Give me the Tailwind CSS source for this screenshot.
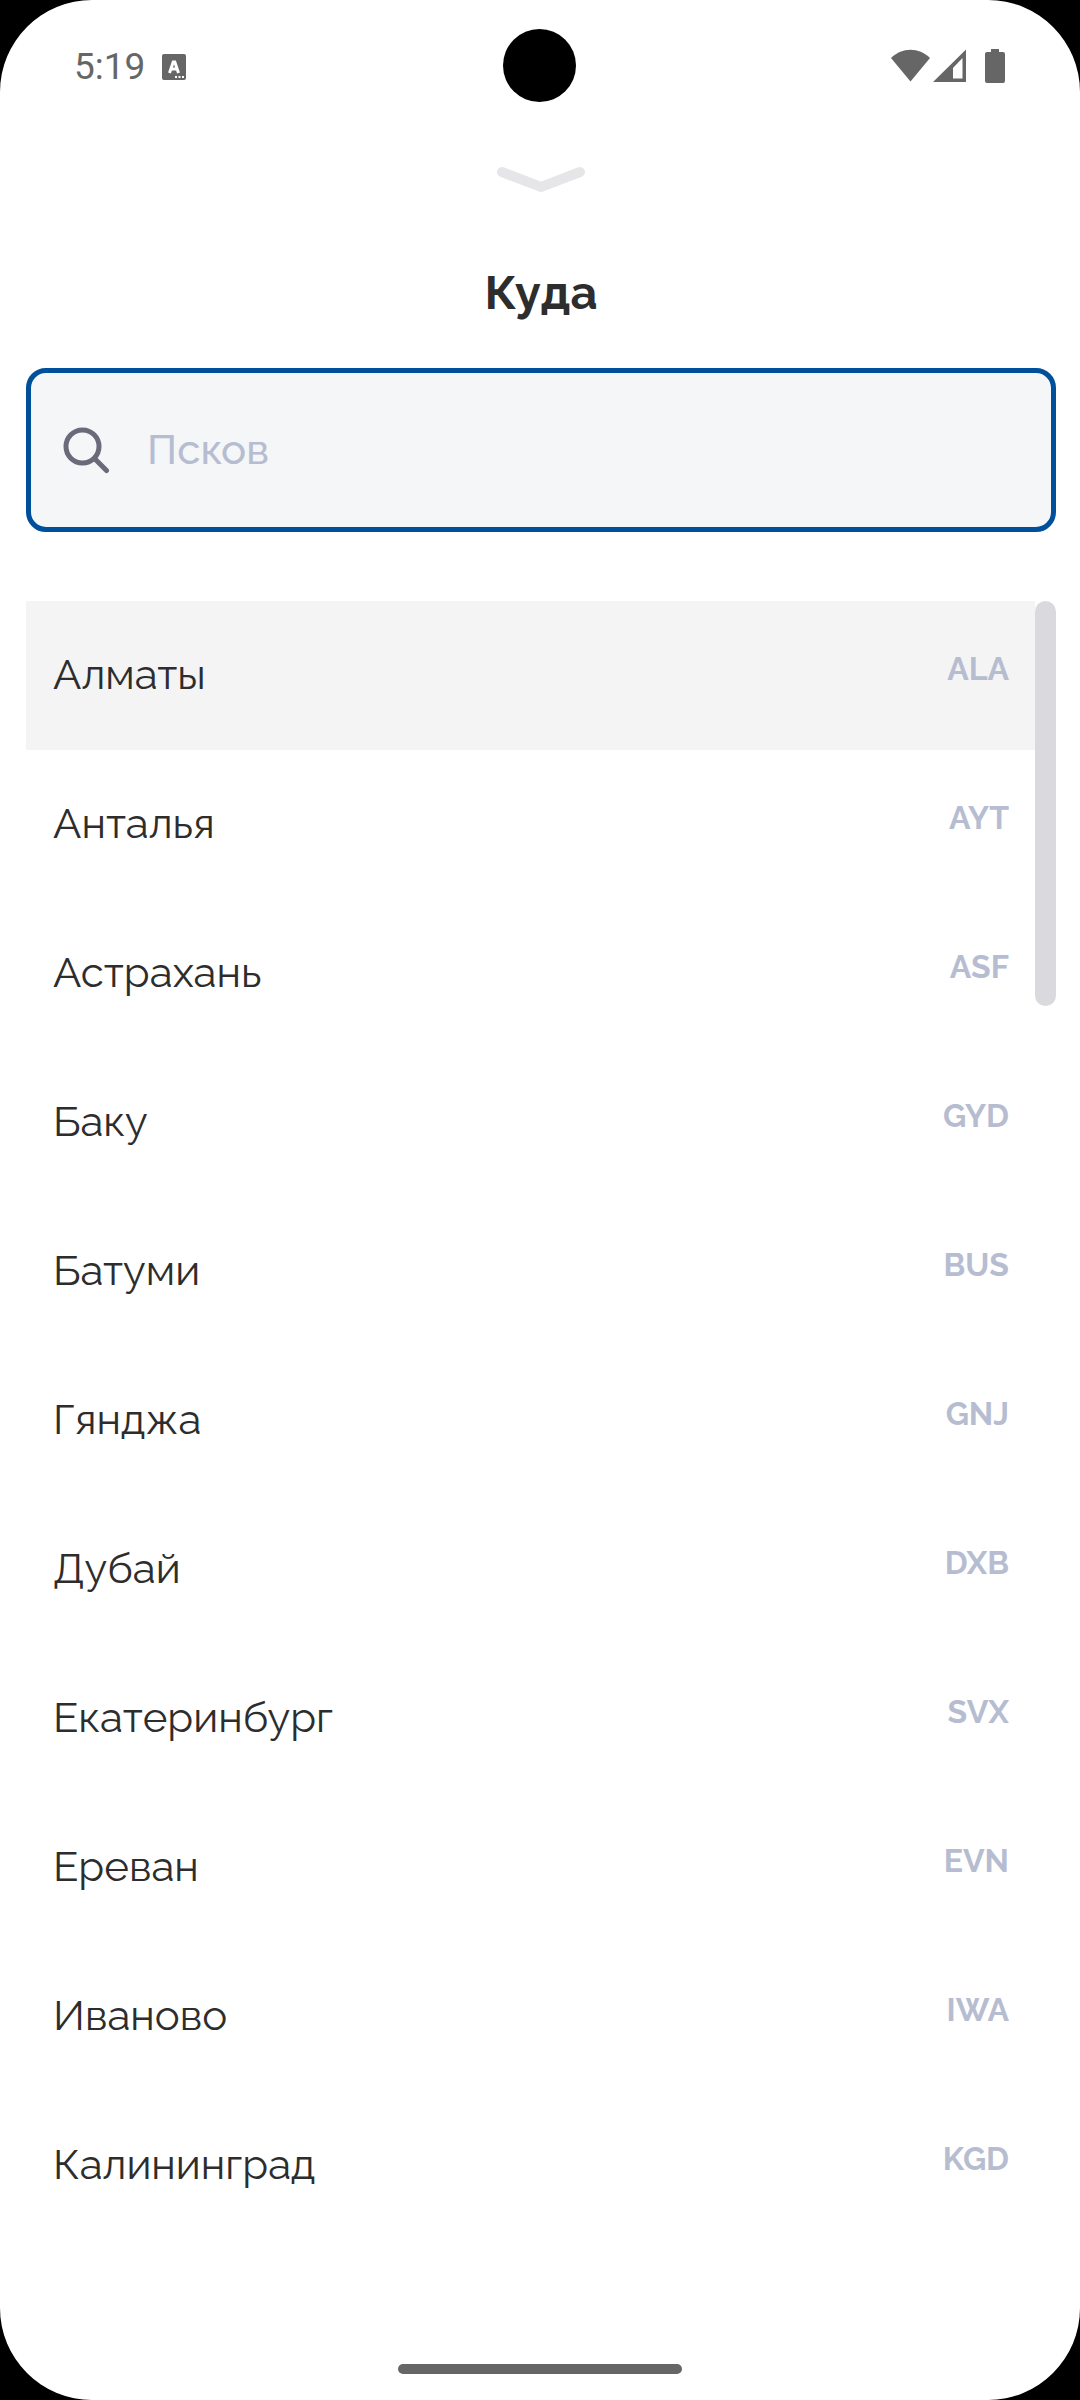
<!DOCTYPE html>
<html lang="ru">
<head>
<meta charset="utf-8">
<meta name="viewport" content="width=device-width, initial-scale=1">
<title>Куда</title>
<script src="https://cdn.jsdelivr.net/npm/@tailwindcss/browser@4"></script>
</head>
<body class="bg-black">
<div class="flex min-h-screen flex-col rounded-[92px] bg-white font-['Raleway','Inter',sans-serif] text-[#2d2d2d]">
  <!-- Status bar -->
  <header class="grid h-[131px] grid-cols-3 items-center px-[74px] text-[#666]">
    <div class="flex items-center gap-[17px] pt-[2px]">
      <time class="font-['Roboto',sans-serif] text-[37px] leading-none">5:19</time>
      <svg class="h-[26px] w-6" viewBox="0 0 24 26" aria-hidden="true">
        <rect width="24" height="26" rx="2" fill="currentColor"/>
        <path d="M7.500 19 11.200 8h1.600L16.500 19M9 15h6" fill="none" stroke="#fff" stroke-width="3"/>
        <path d="M13 22h2v2h-2zM16.500 22h2v2h-2zM20 22h2v2h-2z" fill="#fff"/>
      </svg>
    </div>
    <div class="size-[73px] justify-self-center rounded-full bg-black"></div>
    <div class="flex items-center justify-end">
      <svg class="h-[34px] w-[115px]" viewBox="0 0 115 34" fill="currentColor" aria-hidden="true">
        <path d="M0 9C11-2 28-2 39 9L19.500 32.500z"/>
        <path fill-rule="evenodd" d="M75 .5V33H42zM71.500 9 62 19V29.500h9.500z"/>
        <path d="M100 0h8v3h4q2 0 2 2v27q0 2-2 2H96q-2 0-2-2V5q0-2 2-2h4z"/>
      </svg>
    </div>
  </header>

  <main class="flex grow flex-col pr-6 pl-[26px]">
    <button type="button" aria-label="Закрыть" class="mt-[34px] self-center">
      <svg class="h-7 w-[90px]" viewBox="0 0 90 28" fill="none" stroke="#e6e6e8" stroke-width="10" stroke-linecap="round" aria-hidden="true">
        <path d="M6 7 45 22 84 7"/>
      </svg>
    </button>
    <h1 class="mt-[72px] text-center text-[47px] leading-[56px] font-bold">Куда</h1>
    <label class="mt-[47px] flex h-[164px] items-center gap-[37px] rounded-[20px] border-5 border-[#004f9b] bg-[#f4f6f8] px-8">
      <svg class="size-[47px] shrink-0" viewBox="0 0 47 47" fill="none" stroke="#6b6a7a" stroke-width="5" stroke-linecap="round" aria-hidden="true">
        <circle cx="19.500" cy="19.500" r="16.500"/>
        <path d="M32 32 43.500 43.500"/>
      </svg>
      <input type="text" aria-label="Куда" placeholder="Псков" class="min-w-0 grow bg-transparent text-[42px] leading-[56px] font-medium outline-none placeholder:text-[#b7bdd1]">
    </label>

    <div class="mt-[69px] flex items-start">
      <ul class="grow text-[42px]">
        <li><button type="button" class="flex h-[149px] w-full items-center justify-between bg-[#f4f4f4] pr-[26px] pb-[2px] pl-[27px]"><span>Алматы</span><span class="pb-3 text-[32px] font-bold text-[#b7bdd1]">ALA</span></button></li>
        <li><button type="button" class="flex h-[149px] w-full items-center justify-between pr-[26px] pb-[2px] pl-[27px]"><span>Анталья</span><span class="pb-3 text-[32px] font-bold text-[#b7bdd1]">AYT</span></button></li>
        <li><button type="button" class="flex h-[149px] w-full items-center justify-between pr-[26px] pb-[2px] pl-[27px]"><span>Астрахань</span><span class="pb-3 text-[32px] font-bold text-[#b7bdd1]">ASF</span></button></li>
        <li><button type="button" class="flex h-[149px] w-full items-center justify-between pr-[26px] pb-[2px] pl-[27px]"><span>Баку</span><span class="pb-3 text-[32px] font-bold text-[#b7bdd1]">GYD</span></button></li>
        <li><button type="button" class="flex h-[149px] w-full items-center justify-between pr-[26px] pb-[2px] pl-[27px]"><span>Батуми</span><span class="pb-3 text-[32px] font-bold text-[#b7bdd1]">BUS</span></button></li>
        <li><button type="button" class="flex h-[149px] w-full items-center justify-between pr-[26px] pb-[2px] pl-[27px]"><span>Гянджа</span><span class="pb-3 text-[32px] font-bold text-[#b7bdd1]">GNJ</span></button></li>
        <li><button type="button" class="flex h-[149px] w-full items-center justify-between pr-[26px] pb-[2px] pl-[27px]"><span>Дубай</span><span class="pb-3 text-[32px] font-bold text-[#b7bdd1]">DXB</span></button></li>
        <li><button type="button" class="flex h-[149px] w-full items-center justify-between pr-[26px] pb-[2px] pl-[27px]"><span>Екатеринбург</span><span class="pb-3 text-[32px] font-bold text-[#b7bdd1]">SVX</span></button></li>
        <li><button type="button" class="flex h-[149px] w-full items-center justify-between pr-[26px] pb-[2px] pl-[27px]"><span>Ереван</span><span class="pb-3 text-[32px] font-bold text-[#b7bdd1]">EVN</span></button></li>
        <li><button type="button" class="flex h-[149px] w-full items-center justify-between pr-[26px] pb-[2px] pl-[27px]"><span>Иваново</span><span class="pb-3 text-[32px] font-bold text-[#b7bdd1]">IWA</span></button></li>
        <li><button type="button" class="flex h-[149px] w-full items-center justify-between pr-[26px] pb-[2px] pl-[27px]"><span>Калининград</span><span class="pb-3 text-[32px] font-bold text-[#b7bdd1]">KGD</span></button></li>
      </ul>
      <div class="h-[405px] w-[21px] shrink-0 rounded-full bg-[#d9d9de]"></div>
    </div>
  </main>

  <footer class="flex justify-center pb-[26px]">
    <div class="h-[10px] w-[284px] rounded-full bg-[#666]"></div>
  </footer>
</div>
</body>
</html>
